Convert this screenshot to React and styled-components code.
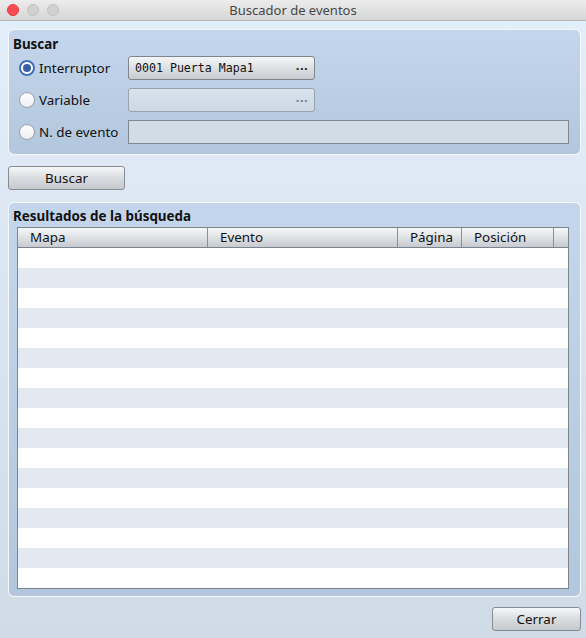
import React from 'react'
import styled, { createGlobalStyle } from 'styled-components'

const Global = createGlobalStyle`
  html, body { margin: 0; padding: 0; }
  body {
    font-family: "Noto Sans", "DejaVu Sans", sans-serif;
    font-size: 13px;
    color: #111;
  }
`

const Window = styled.div`
  width: 586px;
  height: 638px;
  display: flex;
  flex-direction: column;
  overflow: hidden;
`

const TitleBar = styled.div`
  height: 20px;
  flex: none;
  display: flex;
  align-items: center;
  position: relative;
  background: linear-gradient(#ececec, #d6d6d6);
  border-bottom: 1px solid #b4b4b4;
`

const Lights = styled.div`
  display: flex;
  gap: 8px;
  padding-left: 7px;
`

const Light = styled.span`
  width: 12px;
  height: 12px;
  border-radius: 50%;
  box-sizing: border-box;
  background: ${p => (p.red ? '#fc4a52' : '#d0d0d0')};
  border: 1px solid ${p => (p.red ? '#e23a42' : '#c2c2c2')};
`

const Title = styled.div`
  position: absolute;
  left: 0;
  right: 0;
  text-align: center;
  color: #474747;
  font-size: 13px;
  pointer-events: none;
`

const Body = styled.div`
  flex: 1;
  display: flex;
  flex-direction: column;
  padding: 8px 5px 7px 8px;
  background: linear-gradient(#e3eefb, #dbe6f2 40%, #cfdbe7);
`

const Group = styled.div`
  border: 1px solid rgba(255, 255, 255, 0.85);
  border-radius: 6px;
  background: linear-gradient(#c4d6eb, #b2c7dd);
  display: flex;
  flex-direction: column;
  ${p => p.grow && 'flex: 1;'}
  padding: ${p => p.pad};
`

const GroupTitle = styled.div`
  font-weight: bold;
  font-size: 13.4px;
  line-height: 16px;
  margin-left: ${p => p.indent}px;
`

const Rows = styled.div`
  display: grid;
  grid-template-columns: 109px 187px 1fr;
  row-gap: 8px;
  margin-top: 4px;
  padding-left: 8px;
  align-items: center;
`

const RadioLabel = styled.label`
  display: flex;
  align-items: center;
  gap: 4px;
  height: 24px;
  font-size: 13.4px;
`

const Radio = styled.span`
  width: 16px;
  height: 16px;
  box-sizing: border-box;
  border-radius: 50%;
  display: flex;
  align-items: center;
  justify-content: center;
  border: ${p => (p.on ? '2px solid #4470bb' : '1px solid #9aa0a8')};
  background: ${p => (p.on ? '#ffffff' : 'linear-gradient(#ffffff, #eceef1)')};
  &::after {
    content: '';
    display: ${p => (p.on ? 'block' : 'none')};
    width: 8px;
    height: 8px;
    border-radius: 50%;
    background: #3a5da6;
  }
`

const Combo = styled.div`
  height: 24px;
  box-sizing: border-box;
  border: 1px solid ${p => (p.disabled ? '#9aa3ad' : '#7e858d')};
  border-radius: 3px;
  display: flex;
  align-items: center;
  justify-content: space-between;
  padding: 0 6px 0 6px;
  background: ${p => (p.disabled ? 'linear-gradient(#d8e2ec, #ccd8e4)' : 'linear-gradient(#f4f5f6, #c7cbd0)')};
  font-family: "DejaVu Sans Mono", "Liberation Mono", monospace;
  font-size: 11.6px;
  color: #111;
`

const Dots = styled.span`
  font-family: "DejaVu Sans", sans-serif;
  font-size: 11px;
  font-weight: bold;
  color: ${p => (p.disabled ? '#7b8590' : '#333')};
  margin-top: -3px;
`

const TextBox = styled.div`
  grid-column: 2 / 4;
  height: 24px;
  box-sizing: border-box;
  border: 1px solid #7f8790;
  background: #d1dce7;
`

const Button = styled.button`
  width: ${p => p.w}px;
  height: 24px;
  box-sizing: border-box;
  border: 1px solid #868c94;
  border-radius: 3px;
  background: linear-gradient(#f6f7f8, #d9dcdf 50%, #c6cace);
  font-family: "Noto Sans", "DejaVu Sans", sans-serif;
  font-size: 13.4px;
  color: #111;
  padding: 0;
  align-self: ${p => p.align || 'flex-start'};
`

const Table = styled.div`
  flex: 1;
  margin-top: 3px;
  border: 1px solid #7c848d;
  background: #fff;
  display: flex;
  flex-direction: column;
`

const Cols = `190px 190px 64px 92px 1fr`

const Header = styled.div`
  display: grid;
  grid-template-columns: ${Cols};
  height: 19px;
  border-bottom: 1px solid #7c848d;
  background: linear-gradient(#f6f7f8, #dcdfe2 55%, #c7cbd0);
`

const HeadCell = styled.div`
  padding-left: 12px;
  line-height: 19px;
  font-size: 13.4px;
  border-right: 1px solid #8a9098;
  &:last-child { border-right: none; }
`

const Row = styled.div`
  height: 20px;
  flex: none;
  background: ${p => (p.alt ? '#e3e9f0' : '#ffffff')};
`

export default function App() {
  const rows = Array.from({ length: 17 }, (_, i) => i)
  return (
    <Window>
      <Global />
      <TitleBar>
        <Lights>
          <Light red />
          <Light />
          <Light />
        </Lights>
        <Title>Buscador de eventos</Title>
      </TitleBar>
      <Body>
        <Group pad="6px 11px 10px 2px">
          <GroupTitle indent={2}>Buscar</GroupTitle>
          <Rows>
            <RadioLabel><Radio on />Interruptor</RadioLabel>
            <Combo>0001 Puerta Mapa1<Dots>...</Dots></Combo>
            <span />
            <RadioLabel><Radio />Variable</RadioLabel>
            <Combo disabled><span /><Dots disabled>...</Dots></Combo>
            <span />
            <RadioLabel><Radio />N. de evento</RadioLabel>
            <TextBox />
          </Rows>
        </Group>
        <Button w={117} style={{ marginTop: 11 }}>Buscar</Button>
        <Group grow pad="5px 11px 7px 8px" style={{ marginTop: 12 }}>
          <GroupTitle indent={-4}>Resultados de la búsqueda</GroupTitle>
          <Table>
            <Header>
              <HeadCell>Mapa</HeadCell>
              <HeadCell>Evento</HeadCell>
              <HeadCell>Página</HeadCell>
              <HeadCell>Posición</HeadCell>
              <HeadCell />
            </Header>
            {rows.map(i => <Row key={i} alt={i % 2 === 1} />)}
          </Table>
        </Group>
        <Button w={89} align="flex-end" style={{ marginTop: 10 }}>Cerrar</Button>
      </Body>
    </Window>
  )
}
